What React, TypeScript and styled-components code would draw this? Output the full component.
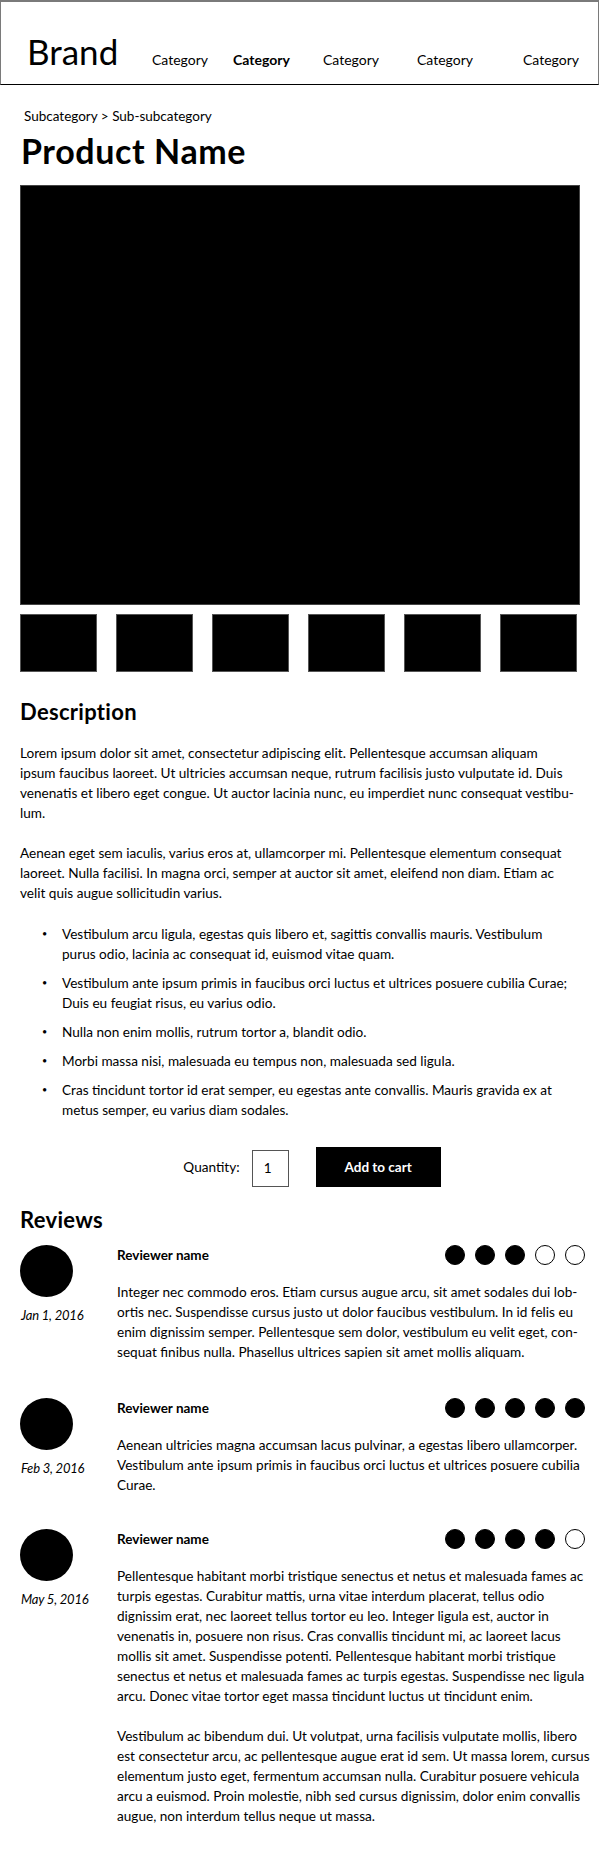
import styled, { createGlobalStyle } from 'styled-components';

const GlobalStyle = createGlobalStyle`
  * {
    box-sizing: border-box;
  }
  body {
    margin: 0;
    background: #fff;
    color: #000;
    font-family: Lato, "Liberation Sans", sans-serif;
  }
`;

const categories = [
  { label: 'Category' },
  { label: 'Category', active: true },
  { label: 'Category' },
  { label: 'Category' },
  { label: 'Category' },
];

// the copy keeps the line breaks of the mockup
const description = [
  [
    'Lorem ipsum dolor sit amet, consectetur adipiscing elit. Pellentesque accumsan aliquam',
    'ipsum faucibus laoreet. Ut ultricies accumsan neque, rutrum facilisis justo vulputate id. Duis',
    'venenatis et libero eget congue. Ut auctor lacinia nunc, eu imperdiet nunc consequat vestibu-',
    'lum.',
  ],
  [
    'Aenean eget sem iaculis, varius eros at, ullamcorper mi. Pellentesque elementum consequat',
    'laoreet. Nulla facilisi. In magna orci, semper at auctor sit amet, eleifend non diam. Etiam ac',
    'velit quis augue sollicitudin varius.',
  ],
];

const bullets = [
  [
    'Vestibulum arcu ligula, egestas quis libero et, sagittis convallis mauris. Vestibulum',
    'purus odio, lacinia ac consequat id, euismod vitae quam.',
  ],
  [
    'Vestibulum ante ipsum primis in faucibus orci luctus et ultrices posuere cubilia Curae;',
    'Duis eu feugiat risus, eu varius odio.',
  ],
  ['Nulla non enim mollis, rutrum tortor a, blandit odio.'],
  ['Morbi massa nisi, malesuada eu tempus non, malesuada sed ligula.'],
  [
    'Cras tincidunt tortor id erat semper, eu egestas ante convallis. Mauris gravida ex at',
    'metus semper, eu varius diam sodales.',
  ],
];

const reviews = [
  {
    date: 'Jan 1, 2016',
    rating: 3,
    gap: 12,
    text: [
      [
        'Integer nec commodo eros. Etiam cursus augue arcu, sit amet sodales dui lob-',
        'ortis nec. Suspendisse cursus justo ut dolor faucibus vestibulum. In id felis eu',
        'enim dignissim semper. Pellentesque sem dolor, vestibulum eu velit eget, con-',
        'sequat finibus nulla. Phasellus ultrices sapien sit amet mollis aliquam.',
      ],
    ],
  },
  {
    date: 'Feb 3, 2016',
    rating: 5,
    gap: 36,
    text: [
      [
        'Aenean ultricies magna accumsan lacus pulvinar, a egestas libero ullamcorper.',
        'Vestibulum ante ipsum primis in faucibus orci luctus et ultrices posuere cubilia',
        'Curae.',
      ],
    ],
  },
  {
    date: 'May 5, 2016',
    rating: 4,
    gap: 34,
    text: [
      [
        'Pellentesque habitant morbi tristique senectus et netus et malesuada fames ac',
        'turpis egestas. Curabitur mattis, urna vitae interdum placerat, tellus odio',
        'dignissim erat, nec laoreet tellus tortor eu leo. Integer ligula est, auctor in',
        'venenatis in, posuere non risus. Cras convallis tincidunt mi, ac laoreet lacus',
        'mollis sit amet. Suspendisse potenti. Pellentesque habitant morbi tristique',
        'senectus et netus et malesuada fames ac turpis egestas. Suspendisse nec ligula',
        'arcu. Donec vitae tortor eget massa tincidunt luctus ut tincidunt enim.',
      ],
      [
        'Vestibulum ac bibendum dui. Ut volutpat, urna facilisis vulputate mollis, libero',
        'est consectetur arcu, ac pellentesque augue erat id sem. Ut massa lorem, cursus',
        'elementum justo eget, fermentum accumsan nulla. Curabitur posuere vehicula',
        'arcu a euismod. Proin molestie, nibh sed cursus dignissim, dolor enim convallis',
        'augue, non interdum tellus neque ut massa.',
      ],
    ],
  },
];

const Lines = ({ lines }: { lines: string[] }) => (
  <>
    {lines.map((l, i) => (
      <Line key={i}>{l}</Line>
    ))}
  </>
);

export default function App() {
  return (
    <>
      <GlobalStyle />
      <Header>
        <Brand>Brand</Brand>
        <Nav>
          {categories.map((c, i) => (
            <NavItem key={i} $active={c.active}>
              {c.label}
            </NavItem>
          ))}
        </Nav>
      </Header>
      <Main>
        <Breadcrumb>Subcategory &gt; Sub-subcategory</Breadcrumb>
        <Title>Product Name</Title>
        <HeroImage />
        <Thumbs>
          {Array.from({ length: 6 }).map((_, i) => (
            <Thumb key={i} />
          ))}
        </Thumbs>

        <SectionTitle $top={27}>Description</SectionTitle>
        <Text>
          {description.map((p, i) => (
            <p key={i}>
              <Lines lines={p} />
            </p>
          ))}
        </Text>
        <Bullets>
          {bullets.map((b, i) => (
            <Bullet key={i}>
              <div>
                <Lines lines={b} />
              </div>
            </Bullet>
          ))}
        </Bullets>

        <BuyRow>
          <QtyLabel htmlFor="qty">Quantity:</QtyLabel>
          <QtyInput id="qty" defaultValue={1} />
          <CartButton>Add to cart</CartButton>
        </BuyRow>

        <SectionTitle $top={20}>Reviews</SectionTitle>
        {reviews.map((r, i) => (
          <Review key={i} $top={r.gap}>
            <div>
              <Avatar />
              <ReviewDate>{r.date}</ReviewDate>
            </div>
            <div>
              <ReviewHead>
                <ReviewerName>Reviewer name</ReviewerName>
                <Rating>
                  {[0, 1, 2, 3, 4].map((n) => (
                    <Dot key={n} $filled={n < r.rating} />
                  ))}
                </Rating>
              </ReviewHead>
              <ReviewBody>
                {r.text.map((t, j) => (
                  <p key={j}>
                    <Lines lines={t} />
                  </p>
                ))}
              </ReviewBody>
            </div>
          </Review>
        ))}
      </Main>
    </>
  );
}

const Header = styled.header`
  display: flex;
  align-items: baseline;
  width: 599px;
  height: 85px;
  padding: 27px 0 0 26px;
  border: 1px solid #7a7a7a;
  border-top-width: 2px;
  border-bottom-color: #000;
`;

const Brand = styled.div`
  width: 125px;
  font-size: 35px;
  line-height: 44px;
`;

const Nav = styled.nav`
  display: grid;
  grid-template-columns: 81px 90px 94px 106px auto;
`;

const NavItem = styled.a<{ $active?: boolean }>`
  font-size: 14px;
  font-weight: ${(p) => (p.$active ? 700 : 400)};
  cursor: pointer;
`;

const Main = styled.main`
  padding: 0 20px 36px;
`;

const Breadcrumb = styled.div`
  margin: 22px 0 0 4px;
  font-size: 13.5px;
  line-height: 18px;
`;

const Title = styled.h1`
  margin: 6px 0 0 1px;
  font-size: 34px;
  line-height: 40px;
  font-weight: 700;
  letter-spacing: 0.6px;
`;

const HeroImage = styled.div`
  margin-top: 14px;
  height: 420px;
  background: #000;
  border: 1px solid #444;
`;

const Thumbs = styled.div`
  display: grid;
  grid-template-columns: repeat(6, 77px);
  gap: 19px;
  margin-top: 9px;
`;

const Thumb = styled.div`
  height: 58px;
  background: #000;
  border: 1px solid #555;
`;

const SectionTitle = styled.h2<{ $top: number }>`
  margin: ${(p) => p.$top}px 0 0;
  font-size: 22px;
  line-height: 26px;
  font-weight: 700;
  letter-spacing: 0.3px;
`;

const Line = styled.span`
  display: block;
  white-space: nowrap;
`;

const Text = styled.div`
  margin-top: 18px;
  font-size: 13.6px;
  line-height: 20px;

  p {
    margin: 0 0 20px;
  }
  p:last-child {
    margin-bottom: 0;
  }
`;

const Bullets = styled.ul`
  margin: 21px 0 0;
  padding: 0 0 0 22px;
  list-style: none;
`;

const Bullet = styled.li`
  display: grid;
  grid-template-columns: 20px 1fr;
  font-size: 13.6px;
  line-height: 20px;

  & + & {
    margin-top: 9px;
  }
  &::before {
    content: '•';
    font-size: 9px;
  }
`;

const BuyRow = styled.div`
  display: flex;
  align-items: center;
  justify-content: center;
  height: 40px;
  margin-top: 27px;
  padding-left: 24px;
`;

const QtyLabel = styled.label`
  font-size: 13.6px;
`;

const QtyInput = styled.input`
  width: 37px;
  height: 37px;
  margin: 2px 27px 0 12px;
  padding: 0 0 0 11px;
  border: 1px solid #555;
  border-radius: 0;
  font-family: inherit;
  font-size: 13.6px;
  color: #000;
`;

const CartButton = styled.button`
  width: 125px;
  height: 40px;
  border: none;
  background: #000;
  color: #fff;
  font-family: inherit;
  font-size: 13.5px;
  font-weight: 700;
  cursor: pointer;
`;

const Review = styled.article<{ $top: number }>`
  display: grid;
  grid-template-columns: 97px 468px;
  margin-top: ${(p) => p.$top}px;
`;

const Avatar = styled.div`
  width: 53px;
  height: 52px;
  border-radius: 50%;
  background: #000;
`;

const ReviewDate = styled.div`
  margin: 8px 0 0 1px;
  font-size: 13px;
  line-height: 20px;
  font-style: italic;
  letter-spacing: -0.2px;
`;

const ReviewHead = styled.div`
  display: flex;
  align-items: center;
  justify-content: space-between;
  height: 20px;
`;

const ReviewerName = styled.div`
  font-size: 13.5px;
  font-weight: 700;
`;

const Rating = styled.div`
  display: flex;
  gap: 10px;
`;

const Dot = styled.span<{ $filled: boolean }>`
  width: 20px;
  height: 20px;
  border-radius: 50%;
  border: 1.2px solid #000;
  background: ${(p) => (p.$filled ? '#000' : '#fff')};
`;

const ReviewBody = styled.div`
  margin-top: 17px;
  font-size: 13.6px;
  line-height: 20px;

  p {
    margin: 0 0 20px;
  }
  p:last-child {
    margin-bottom: 0;
  }
`;
